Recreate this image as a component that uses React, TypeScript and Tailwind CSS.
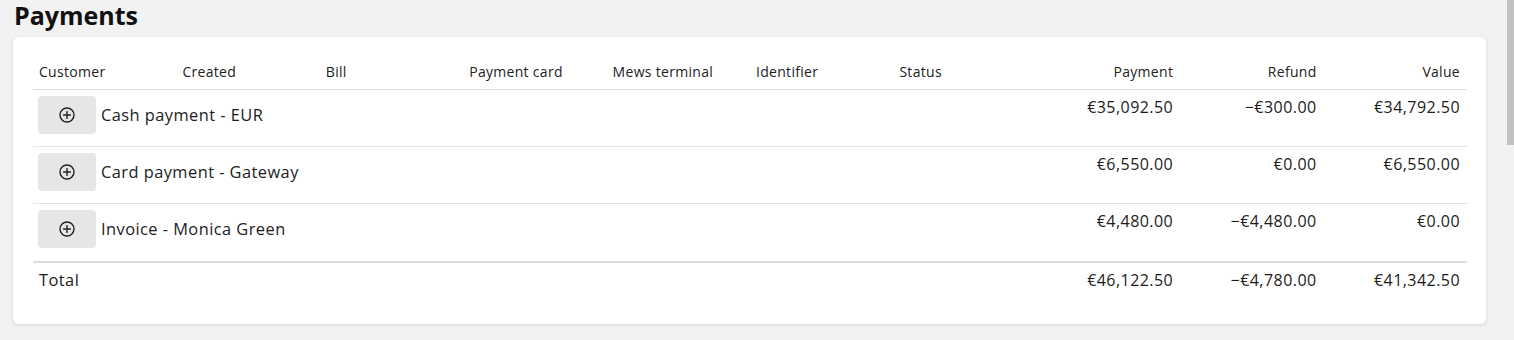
import React from "react";

const rows = [
  { name: "Cash payment - EUR", payment: "€35,092.50", refund: "−€300.00", value: "€34,792.50" },
  { name: "Card payment - Gateway", payment: "€6,550.00", refund: "€0.00", value: "€6,550.00" },
  { name: "Invoice - Monica Green", payment: "€4,480.00", refund: "−€4,480.00", value: "€0.00" },
];

const headers = ["Customer", "Created", "Bill", "Payment card", "Mews terminal", "Identifier", "Status"];

function PlusCircle() {
  return (
    <svg width="16" height="16" viewBox="0 0 16 16" fill="none" stroke="#222" strokeWidth="1.4" strokeLinecap="round">
      <circle cx="8" cy="8" r="7" />
      <line x1="8" y1="4.6" x2="8" y2="11.4" />
      <line x1="4.6" y1="8" x2="11.4" y2="8" />
    </svg>
  );
}

export default function App() {
  return (
    <div
      className="flex w-[1514px] h-[340px] bg-[#f2f2f2] text-[#1c1c1c] overflow-hidden"
      style={{ fontFamily: '"Open Sans", "Noto Sans", sans-serif' }}
    >
      <div className="flex-1 flex flex-col pl-[13px] pr-[19px]">
        <h1 className="h-[31px] leading-[31px] text-[25px] font-bold pl-[1px] text-[#111]">Payments</h1>
        <div className="mt-[6px] bg-white rounded-[6px] shadow-[0_1px_4px_rgba(0,0,0,0.12)] pl-[20px] pr-[19px] pt-[19px] pb-[20px]">
          {/* header */}
          <div className="grid grid-cols-10 h-[34px] items-center pb-[2px] border-b border-[#dedede] text-[14px] tracking-[0.3px] text-[#222]">
            {headers.map((h) => (
              <div key={h} className="px-[6px]">{h}</div>
            ))}
            <div className="px-[7px] text-right">Payment</div>
            <div className="px-[7px] text-right">Refund</div>
            <div className="px-[7px] text-right">Value</div>
          </div>
          {/* rows */}
          {rows.map((r, i) => (
            <div
              key={r.name}
              className={`grid grid-cols-10 text-[16px] tracking-[0.45px] ${i === rows.length - 1 ? "border-b-2 border-[#dcdcdc]" : "border-b border-[#e3e3e3]"}`}
            >
              <div className={`col-span-7 flex items-center gap-[5px] pl-[5px] pt-[6px] ${i === rows.length - 1 ? "pb-[13px]" : "pb-[12px]"}`}>
                <div className="w-[58px] h-[38px] rounded-[4px] bg-[#e6e6e6] flex items-center justify-center">
                  <PlusCircle />
                </div>
                <span className="leading-[22px] text-[16.4px]">{r.name}</span>
              </div>
              <div className="px-[7px] pt-[6px] leading-[22px] text-right">{r.payment}</div>
              <div className="px-[7px] pt-[6px] leading-[22px] text-right">{r.refund}</div>
              <div className="px-[7px] pt-[6px] leading-[22px] text-right">{r.value}</div>
            </div>
          ))}
          {/* total */}
          <div className="grid grid-cols-10 text-[16px] tracking-[0.45px]">
            <div className="col-span-7 px-[6px] pt-[6px] pb-[13px] leading-[22px] text-[16.4px]">Total</div>
            <div className="px-[7px] pt-[6px] leading-[22px] text-right">€46,122.50</div>
            <div className="px-[7px] pt-[6px] leading-[22px] text-right">−€4,780.00</div>
            <div className="px-[7px] pt-[6px] leading-[22px] text-right">€41,342.50</div>
          </div>
        </div>
      </div>
      <div className="w-[9px] h-full bg-[#f1f1f1] flex justify-end">
        <div className="w-[7px] h-[145px] bg-[#c1c1c1]" />
      </div>
    </div>
  );
}
